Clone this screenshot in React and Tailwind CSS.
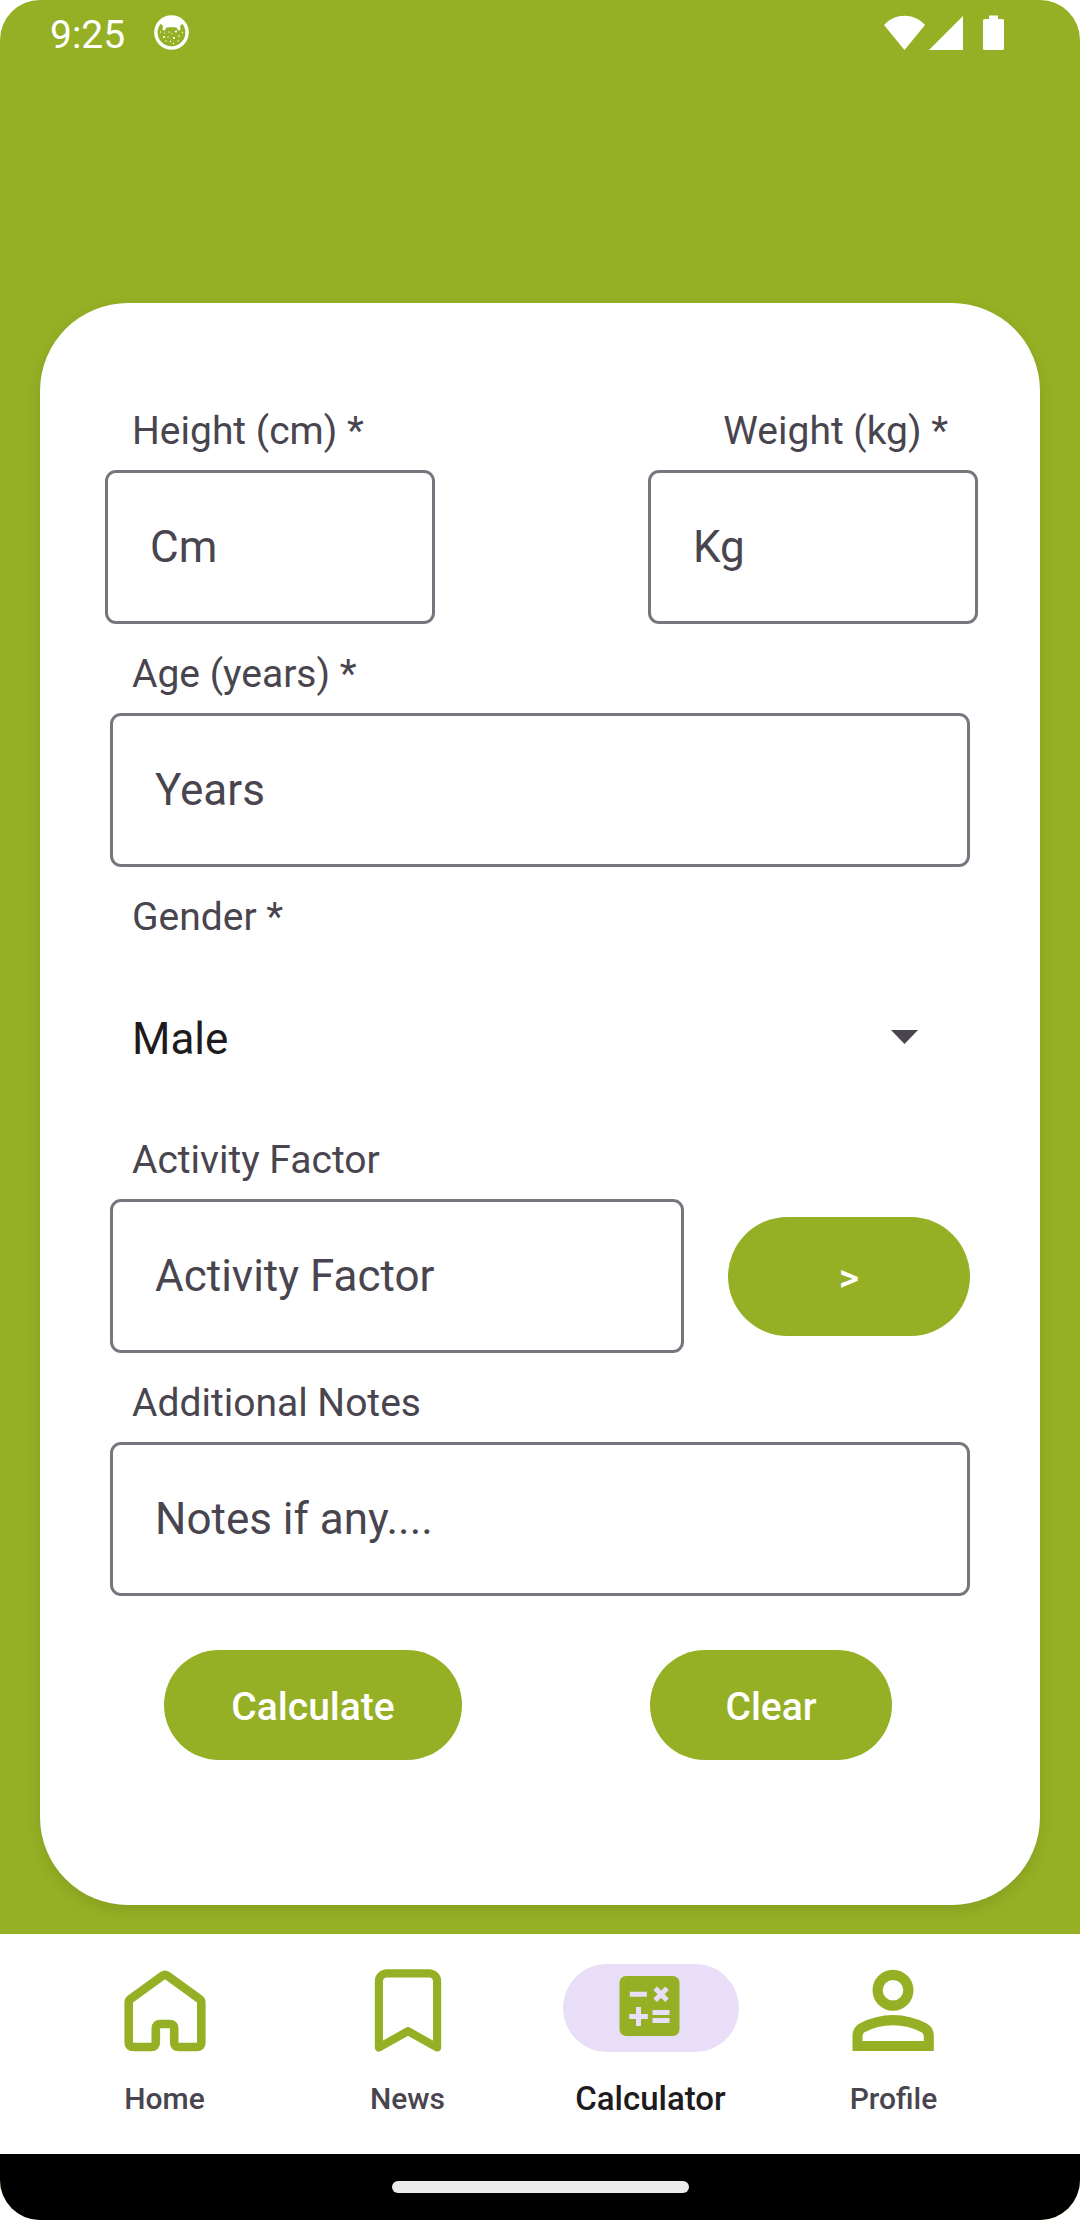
import React from "react";

const labelClass = "block text-[39px] leading-[46px] text-[#49454f]";
const inputClass =
  "block h-[154px] min-w-0 rounded-[11px] border-[3px] border-[#79747e] bg-white px-[42px] text-[44px] text-[#1d1b20] outline-none placeholder:text-[#49454f] placeholder:opacity-100";
const buttonClass =
  "rounded-full bg-[#95b025] text-[39px] font-medium leading-[46px] text-white";

function StatusBar() {
  return (
    <header className="flex h-[66px] items-center justify-between pl-[50px] pr-[76px] text-white">
      <div className="flex items-center gap-[29px]">
        <span className="pt-1 text-[39px] leading-[46px]">9:25</span>
        <svg width="36" height="36" viewBox="0 0 36 36" fill="currentColor" aria-hidden="true">
          <circle cx="17.5" cy="17.5" r="15.6" fill="none" stroke="currentColor" strokeWidth="3.4" />
          <path d="M5.5 7C8 3.500 12 2 17.500 2s9.500 1.500 12 5l-1 1.600L27 10l-1 1.500.8 3-2.300 1.200-2-3.200c-3-.5-7-.5-10 0l-2 3.200-2.300-1.200.8-3L8 10 6.500 8.600z" />
          <circle cx="22" cy="16.500" r="1.100" />
          <circle cx="10" cy="22" r="1.100" />
          <circle cx="20" cy="23" r="1.100" />
          <circle cx="15" cy="17" r=".7" />
          <circle cx="18" cy="18.500" r=".6" />
          <circle cx="6.500" cy="17" r=".7" />
          <circle cx="10.500" cy="18" r=".6" />
          <circle cx="14" cy="22" r=".7" />
          <circle cx="25" cy="21" r=".8" />
          <circle cx="28.500" cy="17.500" r=".7" />
          <circle cx="12" cy="26" r=".7" />
          <circle cx="16.500" cy="26.500" r=".7" />
          <circle cx="24" cy="26" r=".7" />
          <circle cx="19.500" cy="28.500" r=".7" />
        </svg>
      </div>
      <div className="flex items-center" aria-hidden="true">
        <svg width="42" height="36" viewBox="0 0 42 36" fill="currentColor">
          <path d="M0 10C6 3.500 13 .8 20.500.8S35 3.500 41 10L20.500 35z" />
        </svg>
        <svg className="ml-[3px]" width="34" height="36" viewBox="0 0 34 36" fill="currentColor">
          <path d="M34 1v34H0z" />
        </svg>
        <svg className="ml-5" width="21" height="36" viewBox="0 0 21 36" fill="currentColor">
          <path d="M6 .5h9V4h4.500Q21 4 21 5.500v28Q21 35 19.500 35h-18Q0 35 0 33.500v-28Q0 4 1.500 4H6z" />
        </svg>
      </div>
    </header>
  );
}

function HomeIcon() {
  return (
    <svg width="88" height="88" viewBox="20.5 14 88 88" fill="none" stroke="#95b025" strokeWidth="8.6" aria-hidden="true">
      <path d="M28.200 52.500Q28.200 50.300 30 49L62 25.700Q64.500 24 67 25.700L99 49Q100.800 50.300 100.800 52.500V92.400Q100.800 97 96.200 97H78.300Q73.700 97 73.700 92.400V78.600Q73.700 74 69.100 74H59.900Q55.300 74 55.300 78.600V92.400Q55.300 97 50.700 97H32.800Q28.200 97 28.200 92.400Z" />
    </svg>
  );
}

function NewsIcon() {
  return (
    <svg width="88" height="88" viewBox="263.5 14 88 88" fill="none" stroke="#95b025" strokeWidth="8.2" strokeLinejoin="round" aria-hidden="true">
      <path d="M278.400 31.300A8 8 0 0 1 286.400 23.300H328.600A8 8 0 0 1 336.600 31.300V97.500L307.500 81.200L278.400 97.500Z" />
    </svg>
  );
}

function CalculatorIcon() {
  return (
    <svg width="88" height="88" viewBox="46.5 14 88 88" aria-hidden="true">
      <rect x="59" y="26" width="60" height="60" rx="6.500" fill="#95b025" />
      <path
        d="M69.300 44.200H86.300M94.700 38.300L106.500 50.300M106.500 38.300L94.700 50.300M68.700 66.600H87.300M78 57V76M92 62.500H109M92 70.500H109"
        fill="none"
        stroke="#e8def8"
        strokeWidth="5"
      />
    </svg>
  );
}

function ProfileIcon() {
  return (
    <svg width="88" height="88" viewBox="289.5 14 88 88" aria-hidden="true">
      <circle cx="332.500" cy="40.200" r="15.400" fill="none" stroke="#95b025" strokeWidth="10.200" />
      <path
        fill="#95b025"
        fillRule="evenodd"
        d="M292 101V86Q292 77.500 299 73.500Q315 65 332.600 65Q350 65 366.300 73.500Q373.300 77.500 373.300 86V101ZM302 91H363.300V86.500Q363.300 83.500 361 82.300Q348 75.300 332.600 75.300Q317 75.300 304 82.300Q302 83.500 302 86.500Z"
      />
    </svg>
  );
}

const navItems = [
  { name: "Home", Icon: HomeIcon },
  { name: "News", Icon: NewsIcon },
  { name: "Calculator", Icon: CalculatorIcon, active: true },
  { name: "Profile", Icon: ProfileIcon },
];

function BottomNav() {
  return (
    <nav className="grid h-[220px] grid-cols-4 bg-white pl-[43px] pr-[65px] pt-[30px]">
      {navItems.map(({ name, Icon, active }) => (
        <a
          key={name}
          href={"#" + name.toLowerCase()}
          aria-current={active ? "page" : undefined}
          className="flex flex-col items-center gap-[27px]"
        >
          <span
            className={
              active
                ? "flex w-[176px] justify-center rounded-full bg-[#e8def8]"
                : "flex w-[176px] justify-center"
            }
          >
            <Icon />
          </span>
          <span
            className={
              active
                ? "text-[33px] font-medium leading-[40px] text-[#1d1b20]"
                : "text-[30px] font-medium leading-[40px] text-[#49454f]"
            }
          >
            {name}
          </span>
        </a>
      ))}
    </nav>
  );
}

export default function App() {
  return (
    <div className="min-h-screen bg-white font-[Roboto,sans-serif]">
      <div className="flex min-h-screen flex-col overflow-hidden rounded-[40px] bg-[#95b025]">
        <StatusBar />
        <main className="flex-1 px-10 pb-7 pt-[237px]">
          <form
            className="rounded-[88px] bg-white pb-[145px] pt-[105px] shadow-[0_5px_14px_rgba(0,0,0,0.10)]"
            onSubmit={(e) => e.preventDefault()}
          >
            <div className="flex justify-between pl-[65px] pr-[62px]">
              <div className="flex flex-col gap-4">
                <label htmlFor="height" className={labelClass + " pl-[27px]"}>Height (cm) *</label>
                <input id="height" placeholder="Cm" className={inputClass + " w-[330px]"} />
              </div>
              <div className="flex flex-col gap-4">
                <label htmlFor="weight" className={labelClass + " pr-[30px] text-right"}>Weight (kg) *</label>
                <input id="weight" placeholder="Kg" className={inputClass + " w-[330px]"} />
              </div>
            </div>

            <div className="flex flex-col gap-[27px] px-[70px] pt-[27px]">
              <div className="flex flex-col gap-4">
                <label htmlFor="age" className={labelClass + " pl-[22px]"}>Age (years) *</label>
                <input id="age" placeholder="Years" className={inputClass + " w-full"} />
              </div>

              <div className="flex flex-col gap-4">
                <label htmlFor="gender" className={labelClass + " pl-[22px]"}>Gender *</label>
                <div className="relative flex h-[154px] items-center pt-2">
                  <select
                    id="gender"
                    defaultValue="Male"
                    className="w-full appearance-none bg-transparent pl-[22px] pr-20 pt-1 text-[44px] leading-[52px] text-[#1d1b20] outline-none"
                  >
                    <option>Male</option>
                    <option>Female</option>
                  </select>
                  <svg className="pointer-events-none absolute right-[52px]" width="27" height="14" viewBox="0 0 27 14" aria-hidden="true">
                    <path d="M0 0h27L13.500 14z" fill="#49454f" />
                  </svg>
                </div>
              </div>

              <div className="flex flex-col gap-4">
                <label htmlFor="activity" className={labelClass + " pl-[22px]"}>Activity Factor</label>
                <div className="flex items-center gap-11">
                  <input id="activity" placeholder="Activity Factor" className={inputClass + " flex-1"} />
                  <button type="button" className={buttonClass + " h-[119px] w-[242px] pt-1"}>&gt;</button>
                </div>
              </div>

              <div className="flex flex-col gap-4">
                <label htmlFor="notes" className={labelClass + " pl-[22px]"}>Additional Notes</label>
                <input id="notes" placeholder="Notes if any...." className={inputClass + " w-full"} />
              </div>
            </div>

            <div className="flex justify-between pl-[124px] pr-[148px] pt-[54px]">
              <button type="submit" className={buttonClass + " h-[110px] w-[298px] pt-1"}>Calculate</button>
              <button type="reset" className={buttonClass + " h-[110px] w-[242px] pt-1"}>Clear</button>
            </div>
          </form>
        </main>
        <BottomNav />
        <div className="flex h-[66px] items-center justify-center bg-black">
          <div className="h-3 w-[297px] rounded-full bg-[#ebebeb]" />
        </div>
      </div>
    </div>
  );
}
